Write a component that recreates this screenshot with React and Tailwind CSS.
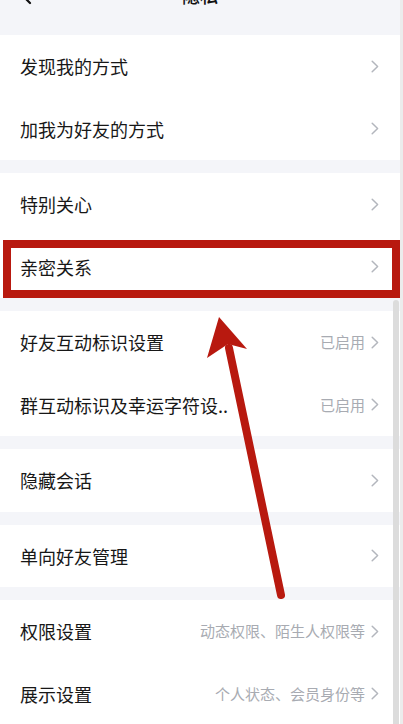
const font = { fontFamily: '"Noto Sans CJK SC", "Noto Sans", sans-serif' };

const Chevron = () => (
  <svg width="8" height="13" viewBox="0 0 8 13" fill="none" className="shrink-0">
    <path d="M1.2 1.2 L6.6 6.5 L1.2 11.8" stroke="#b3b6bd" strokeWidth="1.5" strokeLinecap="round" strokeLinejoin="round" />
  </svg>
);

const Row = ({ label, value }) => (
  <div className="h-[62.5px] flex items-center bg-white pl-5 pr-[21px]">
    <span className="flex-1 min-w-0 whitespace-nowrap text-[18px] text-[#171717] leading-[26px] pr-4">{label}</span>
    {value && <span className="text-[15px] text-[#a8abb2] leading-[22px] mr-[6px] whitespace-nowrap">{value}</span>}
    <Chevron />
  </div>
);

const Gap = () => <div className="h-[13px]" />;

const sections = [
  [{ label: "发现我的方式" }, { label: "加我为好友的方式" }],
  [{ label: "特别关心" }, { label: "亲密关系" }],
  [
    { label: "好友互动标识设置", value: "已启用" },
    { label: "群互动标识及幸运字符设..", value: "已启用" },
  ],
  [{ label: "隐藏会话" }],
  [{ label: "单向好友管理" }],
  [
    { label: "权限设置", value: "动态权限、陌生人权限等" },
    { label: "展示设置", value: "个人状态、会员身份等" },
  ],
];

export default function App() {
  return (
    <div className="relative w-[403px] h-[724px] overflow-hidden bg-[#f4f5f9] flex" style={font}>
      <div className="w-[400px] shrink-0 -mt-[33px]">
        {/* nav bar, mostly scrolled off */}
        <div className="relative h-[56px] flex items-center justify-center">
          <svg width="12" height="20" viewBox="0 0 12 20" fill="none" className="absolute left-[20px] top-[18px]">
            <path d="M10 2 L2 10 L10 18" stroke="#111" strokeWidth="2.2" strokeLinecap="round" strokeLinejoin="round" />
          </svg>
          <span className="text-[18px] text-[#111] font-medium">隐私</span>
        </div>
        <div className="h-[12px]" />
        {sections.map((rows, i) => (
          <div key={i}>
            {i > 0 && <Gap />}
            {rows.map((r) => (
              <Row key={r.label} {...r} />
            ))}
          </div>
        ))}
      </div>
      <div className="w-[3px] bg-[#ececec]" />

      {/* scrollbar */}
      <div className="absolute left-[393px] top-[300px] w-[6px] h-[430px] rounded-full bg-[#dcdcdc]" />

      {/* annotation box */}
      <div className="absolute left-[3px] top-[240px] w-[397px] h-[58px] border-[8px] border-[#b8190f]" />

      {/* annotation arrow */}
      <svg className="absolute left-0 top-0" width="403" height="724" viewBox="0 0 403 724" fill="none">
        <path d="M229 348 L281 595" stroke="#b8190f" strokeWidth="8" strokeLinecap="round" />
        <path d="M219 317 L207 358 L228 344 L247 349 Z" fill="#b8190f" />
      </svg>
    </div>
  );
}
